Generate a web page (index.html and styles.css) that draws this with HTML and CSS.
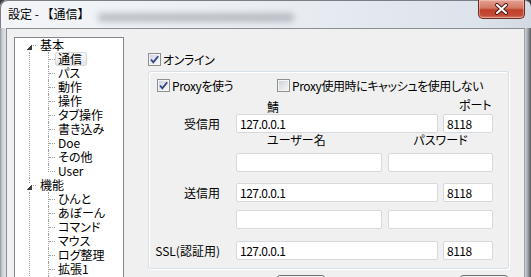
FILE: index.html
```html
<!DOCTYPE html>
<html lang="ja">
<head>
    <meta charset="UTF-8">
    <title>設定 - 【通信】</title>
    <link rel="stylesheet" href="styles.css">
</head>
<body>
    <div class="window">
        <div class="titlebar">
            <span class="title">設定 - 【通信】</span>
            <span class="glass-blur"></span>
            <button class="close-btn" title="閉じる">
                <svg width="15" height="12" viewBox="0 0 15 12">
                    <path d="M3 2 L12 10 M12 2 L3 10" stroke="#4a1d17" stroke-width="4" stroke-linecap="round"/>
                    <path d="M3 2 L12 10 M12 2 L3 10" stroke="#ffffff" stroke-width="2" stroke-linecap="round"/>
                </svg>
            </button>
        </div>

        <div class="window-body">
            <div class="client">
                <div class="tree">
                    <ul class="roots">
                        <li class="node">
                            <div class="row">
                                <svg class="twisty" width="22" height="14" viewBox="0 0 22 14" shape-rendering="crispEdges">
                                    <polygon points="17,6 17,12 11,12" fill="#3c3c3c"/>
                                    <rect x="18" y="7" width="1" height="1" fill="#a0a0a0"/>
                                    <rect x="20" y="7" width="1" height="1" fill="#a0a0a0"/>
                                </svg>
                                <span class="label">基本</span>
                            </div>
                            <div class="children">
                                <ul class="sublist">
                                    <li><span class="dash"></span><span class="label selected">通信</span></li>
                                    <li><span class="dash"></span><span class="label">パス</span></li>
                                    <li><span class="dash"></span><span class="label">動作</span></li>
                                    <li><span class="dash"></span><span class="label">操作</span></li>
                                    <li><span class="dash"></span><span class="label">タブ操作</span></li>
                                    <li><span class="dash"></span><span class="label">書き込み</span></li>
                                    <li><span class="dash"></span><span class="label">Doe</span></li>
                                    <li><span class="dash"></span><span class="label">その他</span></li>
                                    <li class="last"><span class="dash"></span><span class="label">User</span></li>
                                </ul>
                            </div>
                        </li>
                        <li class="node">
                            <div class="row">
                                <svg class="twisty" width="22" height="14" viewBox="0 0 22 14" shape-rendering="crispEdges">
                                    <rect x="14" y="0" width="1" height="1" fill="#a0a0a0"/>
                                    <rect x="14" y="2" width="1" height="1" fill="#a0a0a0"/>
                                    <rect x="14" y="4" width="1" height="1" fill="#a0a0a0"/>
                                    <polygon points="17,6 17,12 11,12" fill="#3c3c3c"/>
                                    <rect x="18" y="7" width="1" height="1" fill="#a0a0a0"/>
                                    <rect x="20" y="7" width="1" height="1" fill="#a0a0a0"/>
                                </svg>
                                <span class="label">機能</span>
                            </div>
                            <div class="children">
                                <ul class="sublist">
                                    <li><span class="dash"></span><span class="label">ひんと</span></li>
                                    <li><span class="dash"></span><span class="label">あぼーん</span></li>
                                    <li><span class="dash"></span><span class="label">コマンド</span></li>
                                    <li><span class="dash"></span><span class="label">マウス</span></li>
                                    <li><span class="dash"></span><span class="label">ログ整理</span></li>
                                    <li><span class="dash"></span><span class="label">拡張1</span></li>
                                    <li><span class="dash"></span></li>
                                </ul>
                            </div>
                        </li>
                    </ul>
                </div>

                <div class="panel">
                    <label class="check-row">
                        <span class="check on">
                            <svg width="11" height="11" viewBox="0 0 11 11"><path d="M2 5.5 L4.3 8.3 L9.2 2.2" fill="none" stroke="#2f4580" stroke-width="1.8"/></svg>
                        </span>オンライン
                    </label>

                    <div class="group">
                        <div class="proxy-row">
                            <label class="check-row proxy-use">
                                <span class="check on">
                                    <svg width="11" height="11" viewBox="0 0 11 11"><path d="M2 5.5 L4.3 8.3 L9.2 2.2" fill="none" stroke="#2f4580" stroke-width="1.8"/></svg>
                                </span>Proxyを使う
                            </label>
                            <label class="check-row">
                                <span class="check"></span>Proxy使用時にキャッシュを使用しない
                            </label>
                        </div>

                        <div class="form-grid">
                            <span class="col-head head-server">鯖</span>
                            <span class="col-head head-port">ポート</span>

                            <span class="row-label r2">受信用</span>
                            <input class="field server r2" type="text" value="127.0.0.1">
                            <input class="field port r2" type="text" value="8118">

                            <span class="col-head head-user">ユーザー名</span>
                            <span class="col-head head-pass">パスワード</span>

                            <input class="field user r4" type="text" value="">
                            <input class="field pass r4" type="text" value="">

                            <span class="row-label r5">送信用</span>
                            <input class="field server r5" type="text" value="127.0.0.1">
                            <input class="field port r5" type="text" value="8118">

                            <input class="field user r6" type="text" value="">
                            <input class="field pass r6" type="text" value="">

                            <span class="row-label r7">SSL(認証用)</span>
                            <input class="field server r7" type="text" value="127.0.0.1">
                            <input class="field port r7" type="text" value="8118">
                        </div>
                    </div>

                    <div class="buttons">
                        <button class="btn btn-ok" aria-label="OK"></button>
                        <button class="btn btn-cancel" aria-label="キャンセル"></button>
                    </div>
                </div>
            </div>
        </div>
    </div>
</body>
</html>
```

FILE: styles.css
```css
html, body {
    margin: 0;
    padding: 0;
    width: 531px;
    height: 277px;
    overflow: hidden;
}
body {
    font-family: "Noto Sans CJK JP", "Noto Sans", sans-serif;
    font-size: 12px;
    line-height: 14px;
    color: #000;
    font-feature-settings: "palt";
    background-color: #3b3e43;
}
.window {
    height: 277px;
    display: flex;
    flex-direction: column;
    border-radius: 7px 7px 0 0;
    background: linear-gradient(to right, #f3f5f8 0%, #ebeff4 45%, #dde3eb 90%, #d3d9e2 100%);
    box-shadow: inset 1px 1px 0 #7a7f86;
}
.titlebar {
    height: 28px;
    display: flex;
    align-items: flex-start;
    flex-shrink: 0;
}
.title {
    padding: 7px 0 0 8px;
    white-space: nowrap;
    font-feature-settings: normal;
}
.glass-blur {
    width: 196px;
    height: 9px;
    margin: 13px 0 0 8px;
    background-color: rgba(70, 74, 82, 0.3);
    border-radius: 4px;
    filter: blur(3px);
}
.close-btn {
    margin-left: auto;
    margin-right: 6px;
    width: 47px;
    height: 19px;
    padding: 0;
    border: 1px solid #6b2c23;
    border-top: none;
    border-radius: 0 0 5px 5px;
    background: linear-gradient(to bottom, #e3a193 0%, #d27764 45%, #c0402a 55%, #c44a35 85%, #d47c68 100%);
    box-shadow: inset 0 0 0 1px rgba(255, 220, 210, 0.45);
    display: flex;
    align-items: center;
    justify-content: center;
}
.close-btn svg {
    display: block;
}
.window-body {
    flex: 1;
    display: flex;
    padding: 0 6px 0 6px;
    background:
        linear-gradient(to right, #8f9398 0px, #c9ced4 2px, #e2e6eb 6px) left top / 6px 100% no-repeat,
        linear-gradient(to right, #d2d6db 0px, #9a9ea4 3px, #55585d 6px) right top / 6px 100% no-repeat;
}
.client {
    flex: 1;
    display: flex;
    align-items: flex-start;
    background-color: #f0f0f0;
    border-top: 1px solid #8a8d92;
    border-left: 1px solid #8a8d92;
    border-right: 1px solid #9a9da2;
    overflow: hidden;
}

/* tree */
.tree {
    width: 110px;
    height: 260px;
    margin: 8px 0 0 7px;
    box-sizing: border-box;
    border: 1px solid #828790;
    background-color: #fff;
    overflow: hidden;
    flex-shrink: 0;
}
.tree ul {
    list-style: none;
    margin: 0;
    padding: 0;
}
.row {
    display: flex;
    height: 14px;
}
.twisty {
    display: block;
    flex-shrink: 0;
}
.label {
    display: inline-block;
    height: 14px;
    box-sizing: border-box;
    line-height: 12px;
    padding: 0 4px 0 2px;
    border: 1px solid transparent;
    white-space: nowrap;
}
.label.selected {
    border-color: #d9d9d9;
    border-radius: 2px;
    background: linear-gradient(to bottom, #fafafa, #e6e6e6);
}
.children {
    margin-left: 14px;
    border-left: 1px dotted #a0a0a0;
}
.sublist {
    margin-left: 18px !important;
}
.sublist li {
    display: flex;
    height: 14px;
    border-left: 1px dotted #a0a0a0;
}
.sublist li.last {
    border-left: none;
}
.dash {
    width: 6px;
    height: 7px;
    border-bottom: 1px dotted #a0a0a0;
    flex-shrink: 0;
}
.sublist li.last .dash {
    border-left: 1px dotted #a0a0a0;
}

/* right panel */
.panel {
    margin: 24px 0 0 24px;
    display: flex;
    flex-direction: column;
}
.check-row {
    display: flex;
    align-items: center;
    height: 13px;
    white-space: nowrap;
    letter-spacing: -0.4px;
}
.check {
    width: 13px;
    height: 13px;
    box-sizing: border-box;
    margin-right: 2px;
    border: 1px solid #8e8f8f;
    box-shadow: inset 0 0 0 1px #f4f4f4;
    background: linear-gradient(135deg, #c9ccd2 0%, #e4e6e9 55%, #f8f8f8 100%);
    flex-shrink: 0;
    display: flex;
    align-items: center;
    justify-content: center;
}
.check.on {
    background: linear-gradient(135deg, #c4cde0 0%, #e6eaf3 55%, #f9f9fb 100%);
}
.check svg {
    display: block;
}
.group {
    width: 361px;
    height: 198px;
    margin-top: 5px;
    box-sizing: border-box;
    border: 1px solid #d5dfe5;
    border-radius: 3px;
    box-shadow: inset 1px 1px 0 #fff, 1px 1px 0 #fff;
    padding: 7px 0 0 8px;
}
.proxy-row {
    display: flex;
}
.proxy-use {
    width: 120px;
}
.form-grid {
    display: grid;
    grid-template-columns: 87px 146px 6px 50px 5px 50px;
    grid-template-rows: 16px 19px 20px 19px 30px 27px 31px;
    margin: 6px 0 0 -8px;
}
.col-head {
    white-space: nowrap;
}
.head-server {
    grid-row: 1;
    grid-column: 2;
    padding-left: 31px;
    align-self: end;
}
.head-port {
    grid-row: 1;
    grid-column: 6;
    padding-left: 16px;
    align-self: start;
}
.head-user {
    grid-row: 3;
    grid-column: 2;
    padding-left: 31px;
    align-self: start;
}
.head-pass {
    grid-row: 3;
    grid-column: 4 / span 3;
    text-align: center;
    align-self: start;
}
.row-label {
    grid-column: 1;
    text-align: right;
    padding-right: 16px;
    line-height: 19px;
    align-self: end;
    white-space: nowrap;
}
.field {
    height: 19px;
    box-sizing: border-box;
    margin: 0;
    padding: 0 3px;
    border: 1px solid #d6d9de;
    border-radius: 2px;
    background-color: #fff;
    font-family: inherit;
    font-size: 12px;
    letter-spacing: -0.5px;
    color: #000;
    align-self: end;
    min-width: 0;
    width: 100%;
}
.server {
    grid-column: 2 / span 3;
}
.port {
    grid-column: 6;
}
.user {
    grid-column: 2;
}
.pass {
    grid-column: 4 / span 3;
}
.r2 { grid-row: 2; }
.r4 { grid-row: 4; }
.r5 { grid-row: 5; }
.r6 { grid-row: 6; }
.r7 { grid-row: 7; }

.buttons {
    display: flex;
    margin-top: 6px;
}
.btn {
    width: 48px;
    height: 23px;
    padding: 0;
    border: 1px solid #707070;
    border-radius: 3px;
    background: linear-gradient(to bottom, #f2f2f2 0%, #ebebeb 50%, #dddddd 51%, #cfcfcf 100%);
}
.btn-ok {
    margin-left: 129px;
}
.btn-cancel {
    margin-left: 135px;
}
```
